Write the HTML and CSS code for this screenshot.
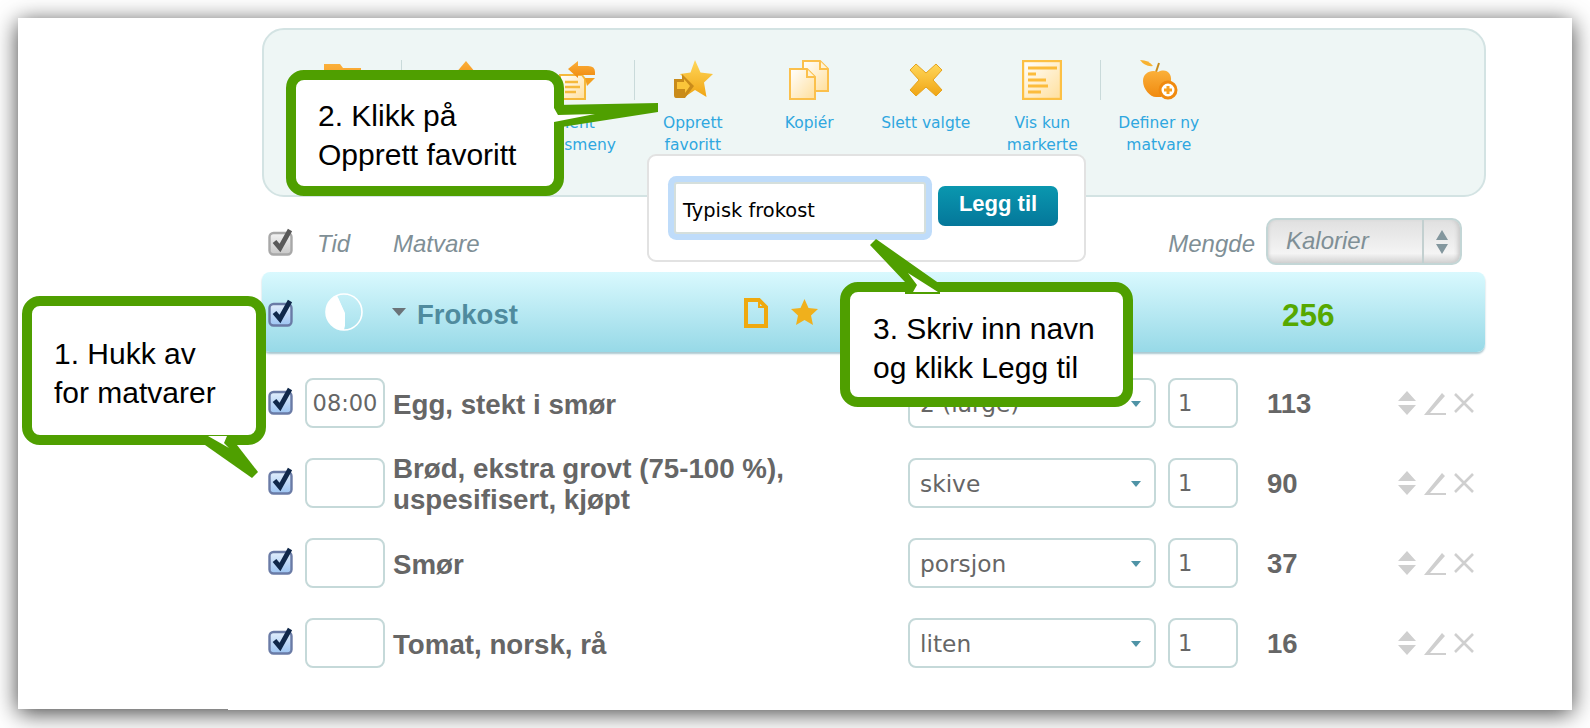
FILE: index.html
```html
<!DOCTYPE html>
<html lang="no">
<head>
<meta charset="utf-8">
<title>Kostholdsplan</title>
<link rel="stylesheet" href="styles.css">
</head>
<body>
<svg class="defs" width="0" height="0" aria-hidden="true">
  <defs>
    <linearGradient id="cbBlue" x1="0" y1="0" x2="0" y2="1"><stop offset="0" stop-color="#e2eefc"/><stop offset="1" stop-color="#9cc4f2"/></linearGradient>
    <linearGradient id="cbGrey" x1="0" y1="0" x2="0" y2="1"><stop offset="0" stop-color="#f4f4f4"/><stop offset="1" stop-color="#c8c8c8"/></linearGradient>
    <linearGradient id="gold" x1="0" y1="0" x2="0" y2="1"><stop offset="0" stop-color="#ffd75a"/><stop offset="1" stop-color="#f0a514"/></linearGradient>
    <linearGradient id="paper" x1="0" y1="0" x2="1" y2="1"><stop offset="0" stop-color="#ffffff"/><stop offset="1" stop-color="#ffdf9c"/></linearGradient>
    <linearGradient id="orange" x1="0" y1="0" x2="0" y2="1"><stop offset="0" stop-color="#fbb03a"/><stop offset="1" stop-color="#f08a10"/></linearGradient>
    <symbol id="cb" viewBox="0 0 26 29"><rect x="1.5" y="6" width="22" height="21.500" rx="4" fill="url(#cbBlue)" stroke="#6a7ba6" stroke-width="2.400"/><path d="M6.500 14.500l5.500 6.500L22 3" fill="none" stroke="#10284a" stroke-width="4.800"/></symbol>
    <symbol id="cbg" viewBox="0 0 26 29"><rect x="1.5" y="6" width="22" height="21.500" rx="4" fill="url(#cbGrey)" stroke="#a8a8a8" stroke-width="2.400"/><path d="M6.500 14.500l5.500 6.500L22 3" fill="none" stroke="#5a5a5a" stroke-width="4.800"/></symbol>
    <symbol id="acts" viewBox="0 0 76 26"><path d="M0 11L9 1l9 10zM0 15h18l-9 10z" fill="#cfcfcf"/><path d="M26 25L44 3l3 3-15 17h16v2z" fill="#cfcfcf"/><path d="M57 4l18 18M75 4L57 22" fill="none" stroke="#cfcfcf" stroke-width="2.600"/></symbol>
    <symbol id="arrow" viewBox="0 0 10 6"><path d="M0 0h10L5 6z" fill="#4f93a6"/></symbol>
  </defs>
</svg>

<main class="window">
  <section class="toolbar">
    <div class="tool sep">
      <svg class="ico" viewBox="0 0 40 40"><path d="M1 4h16l3 4h18v28H1z" fill="url(#orange)"/></svg>
    </div>
    <div class="tool">
      <svg class="ico" viewBox="0 0 40 40"><path d="M2 14h22v24H2z" fill="url(#paper)" stroke="#f5b93c" stroke-width="2"/><path d="M26 1l9 11-12 10-8-8z" fill="url(#orange)"/></svg>
    </div>
    <div class="tool sep">
      <svg class="ico" viewBox="0 0 40 40"><path d="M4 15h22l3 4v20H4z" fill="url(#paper)" stroke="#f5b93c" stroke-width="2"/><path d="M9 22h13M9 27h15M9 32h11" stroke="#f5b93c" stroke-width="2.500"/><path d="M12 9l10-8v5h10q7 0 7 6v3H22v3z" fill="url(#orange)"/><path d="M29 18h10l-8 8z" fill="#f3a020"/></svg>
      <span>Hent<br>ukesmeny</span>
    </div>
    <div class="tool">
      <svg class="ico" viewBox="0 0 40 40"><path d="M22 0l5.500 12.500L40 14l-9 8.500L33.500 37 22 30 13 36l2-14L7 14l10.500-1.500z" fill="url(#gold)"/><path d="M1 19h8v-5l12 12-9 12H3q-2 0-2-3z" fill="#c98b1a"/><path d="M4 22h7v-3l6 7-5 7v-4H4z" fill="#fbc53a"/></svg>
      <span>Opprett<br>favoritt</span>
    </div>
    <div class="tool">
      <svg class="ico" viewBox="0 0 40 40"><path d="M14 1h17l8 8v22H14z" fill="url(#paper)" stroke="#fbc04c" stroke-width="2"/><path d="M31 1v8h8" fill="#fff3d6" stroke="#fbc04c" stroke-width="2"/><path d="M1 9h17l8 8v22H1z" fill="url(#paper)" stroke="#fbc04c" stroke-width="2"/><path d="M18 9v8h8" fill="#fff3d6" stroke="#fbc04c" stroke-width="2"/></svg>
      <span>Kopiér</span>
    </div>
    <div class="tool">
      <svg class="ico" viewBox="0 0 40 40"><path d="M10 4l10 9 10-9 6 6-9 10 9 10-6 6-10-9-10 9-6-6 9-10-9-10z" fill="url(#gold)" stroke="#e6a41e"/></svg>
      <span>Slett valgte</span>
    </div>
    <div class="tool sep">
      <svg class="ico" viewBox="0 0 40 40"><rect x="1" y="1" width="38" height="38" fill="url(#paper)" stroke="#fcc044" stroke-width="2.400"/><path d="M6 8h29M6 14h8M6 20h18M6 26h20M6 32h13" stroke="#fcbc3c" stroke-width="3"/></svg>
      <span>Vis kun<br>markerte</span>
    </div>
    <div class="tool">
      <svg class="ico" viewBox="0 0 40 40"><path d="M1 0q9 0 13 6-8 1-13-6z" fill="#f8b230"/><path d="M20 3l-3 9" stroke="#c98b1a" stroke-width="2" fill="none"/><path d="M19 12c8-4 14 1 13 9-4 1-9 5-10 12v4h-1c-1 0-3 0-4 0-6 0-13-8-13-16 0-8 8-12 15-9z" fill="url(#orange)"/><circle cx="29" cy="30" r="8" fill="#fff" stroke="#f08a10" stroke-width="3"/><path d="M25 30h8M29 26v8" stroke="#f8a020" stroke-width="3"/></svg>
      <span>Definer ny<br>matvare</span>
    </div>
  </section>

  <section class="head">
    <svg class="cb"><use href="#cbg"/></svg>
    <span class="h-tid">Tid</span>
    <span class="h-mat">Matvare</span>
    <span class="h-men">Mengde</span>
    <div class="unit">
      <span class="unit-val">Kalorier</span>
      <span class="unit-btn"><svg width="16" height="28" viewBox="0 0 16 28"><path d="M2 12L8 2l6 10zM2 16h12L8 26z" fill="#83979e"/></svg></span>
    </div>
  </section>

  <section class="meal">
    <svg class="cb"><use href="#cb"/></svg>
    <svg class="clock" viewBox="0 0 38 38"><circle cx="19" cy="19" r="18" fill="none" stroke="#fff" stroke-width="1.600"/><path d="M19 19L19 37A18 18 0 0 1 12 2.500z" fill="#fff"/><path d="M12 2.500L20 20V37" fill="#fff"/></svg>
    <svg class="tri" viewBox="0 0 14 8"><path d="M0 0h14L7 8z" fill="#6b7378"/></svg>
    <strong class="meal-name">Frokost</strong>
    <svg class="doc" viewBox="0 0 24 30"><path d="M2 2h13l7 7v19H2z" fill="none" stroke="#efa90f" stroke-width="4"/><path d="M15 2v7h7" fill="none" stroke="#efa90f" stroke-width="2"/></svg>
    <svg class="mstar" viewBox="0 0 27 26"><path d="M13.500 0l4 9 9.500 1-7 6.500 2 9.500-8.500-5-8.500 5 2-9.500L0 10l9.500-1z" fill="#f0b01c"/></svg>
    <strong class="meal-sum">256</strong>
  </section>

  <section class="rows">
    <div class="row">
      <svg class="cb"><use href="#cb"/></svg>
      <div class="field time">08:00</div>
      <div class="name">Egg, stekt i smør</div>
      <div class="field sel">2 (large)<svg class="sel-arrow"><use href="#arrow"/></svg></div>
      <div class="field qty">1</div>
      <div class="num">113</div>
      <svg class="acts"><use href="#acts"/></svg>
    </div>
    <div class="row">
      <svg class="cb"><use href="#cb"/></svg>
      <div class="field time"></div>
      <div class="name">Brød, ekstra grovt (75-100 %),<br>uspesifisert, kjøpt</div>
      <div class="field sel">skive<svg class="sel-arrow"><use href="#arrow"/></svg></div>
      <div class="field qty">1</div>
      <div class="num">90</div>
      <svg class="acts"><use href="#acts"/></svg>
    </div>
    <div class="row">
      <svg class="cb"><use href="#cb"/></svg>
      <div class="field time"></div>
      <div class="name">Smør</div>
      <div class="field sel">porsjon<svg class="sel-arrow"><use href="#arrow"/></svg></div>
      <div class="field qty">1</div>
      <div class="num">37</div>
      <svg class="acts"><use href="#acts"/></svg>
    </div>
    <div class="row">
      <svg class="cb"><use href="#cb"/></svg>
      <div class="field time"></div>
      <div class="name">Tomat, norsk, rå</div>
      <div class="field sel">liten<svg class="sel-arrow"><use href="#arrow"/></svg></div>
      <div class="field qty">1</div>
      <div class="num">16</div>
      <svg class="acts"><use href="#acts"/></svg>
    </div>
  </section>

  <div class="popup">
    <div class="pop-input">Typisk frokost</div>
    <div class="pop-btn">Legg til</div>
  </div>

  <div class="callout c1">
    <svg class="tail" width="244" height="149"><path d="M183 149L230 182 236 176 215 149z" fill="#4f9f00"/><path d="M186 140H205L202 147 207 152z" fill="#fff"/></svg>
    1. Hukk av<br>for matvarer
  </div>
  <div class="callout c2">
    <svg class="tail" width="278" height="126"><path d="M269 35L372 33V42L269 58z" fill="#4f9f00"/><path d="M268 38L272 45 309 44 268 52z" fill="#fff"/></svg>
    2. Klikk på<br>Opprett favoritt
  </div>
  <div class="callout c3">
    <svg class="tail" width="293" height="125"><path d="M30-37L36-43 100 2V12H65V0z" fill="#4f9f00"/><path d="M68-9L98 10H73L77 3z" fill="#fff"/></svg>
    3. Skriv inn navn<br>og klikk Legg til
  </div>
</main>
</body>
</html>
```

FILE: styles.css
```css
* { box-sizing: border-box; }
html, body { margin: 0; height: 100%; background: #fff; overflow: hidden; }
.defs { position: absolute; }

.window {
  position: relative;
  width: 1554px;
  height: 691px;
  margin: 18px;
  padding: 10px 0 0 244px;
  background: #fff;
  box-shadow: 0 4px 22px rgba(0, 0, 0, .75);
  font-family: "Liberation Sans", Arial, sans-serif;
}
.window::after {
  content: "";
  position: absolute;
  left: 210px;
  right: 0;
  bottom: -1px;
  height: 1px;
  background: #fff;
}

/* toolbar */
.toolbar {
  display: flex;
  width: 1224px;
  height: 169px;
  padding: 30px 0 0 21px;
  background: #eef6f5;
  border: 2px solid #d3e3e3;
  border-radius: 22px;
}
.tool {
  position: relative;
  width: 116.500px;
  text-align: center;
  font: 15.500px/22px "DejaVu Sans", Verdana, sans-serif;
  color: #2fa7e0;
}
.tool span { display: block; margin-top: 12px; }
.ico { display: block; width: 40px; height: 40px; margin: 0 auto; }
.sep::after {
  content: "";
  position: absolute;
  right: 0;
  top: 0;
  width: 1px;
  height: 40px;
  background: #c9dada;
}

/* column headers */
.head {
  display: flex;
  align-items: center;
  height: 47px;
  margin: 21px 0 7px;
  padding-left: 6px;
  width: 1200px;
  font-style: italic;
  font-size: 24px;
  color: #7f8f96;
}
.cb { display: block; width: 26px; height: 29px; flex: none; }
.h-tid { width: 76px; margin: 5px 0 0 23px; }
.h-mat { margin-top: 5px; }
.h-men { margin: 5px 0 0 auto; }
.unit {
  display: flex;
  width: 196px;
  height: 47px;
  margin-left: 11px;
  border: 2px solid #c3d6d6;
  border-radius: 10px;
  background: linear-gradient(#e0e0e0, #f4f4f4 78%, #d2d2d2);
  box-shadow: inset 3px 0 3px -2px #cfcfcf, inset -4px 0 4px -2px #c8c8c8;
}
.unit-val { flex: 1; padding: 7px 0 0 18px; border-right: 2px solid #c3d0d0; }
.unit-btn { display: flex; width: 36px; align-items: center; justify-content: center; }

/* meal bar */
.meal {
  display: flex;
  align-items: center;
  width: 1223px;
  height: 80px;
  padding-left: 6px;
  border-radius: 8px;
  background: linear-gradient(#d9f9fe, #97d9e7);
  box-shadow: 0 2px 2px #aac8d0;
}
.clock { width: 38px; height: 38px; margin-left: 31px; flex: none; }
.tri { width: 14px; height: 8px; margin-left: 29px; flex: none; }
.meal-name { margin: 6px 0 0 11px; width: 327px; font-size: 27.500px; color: #4f8b9e; }
.doc { width: 24px; height: 30px; margin-top: 2px; flex: none; }
.mstar { width: 27px; height: 26px; margin-left: 23px; flex: none; }
.meal-sum { margin: 7px 0 0 464px; font-size: 31.500px; color: #56a800; }

/* rows */
.rows { margin-top: 11px; width: 1218px; }
.row {
  display: grid;
  grid-template-columns: 37px 88px 515px 260px 99px 131px 76px;
  align-items: center;
  height: 80px;
  padding-left: 6px;
}
.row .cb { margin-top: -5px; }
.field {
  position: relative;
  height: 50px;
  border: 2px solid #c5d9d9;
  border-radius: 8px;
  background: #fff;
  font: 22.500px/47px "DejaVu Sans", Verdana, sans-serif;
  color: #666;
}
.time { width: 80px; text-align: center; white-space: nowrap; }
.sel { width: 248px; padding-left: 10px; font-size: 23.300px; }
.qty { width: 70px; padding-left: 8px; }
.sel-arrow { position: absolute; right: 13px; top: 21px; width: 10px; height: 6px; }
.name { padding-top: 2px; font-weight: 700; font-size: 27.700px; line-height: 31px; color: #666; }
.num { padding-top: 2px; font-weight: 700; font-size: 27.500px; color: #666; }
.acts { display: block; width: 76px; height: 26px; }

/* popup */
.popup {
  position: absolute;
  left: 629px;
  top: 136px;
  display: flex;
  width: 439px;
  height: 108px;
  padding: 20px 0 0 19px;
  background: #fff;
  border: 2px solid #e2e2e2;
  border-radius: 9px;
}
.pop-input {
  width: 252px;
  height: 52px;
  margin: 6px 12px 6px 6px;
  padding-left: 7px;
  border: 2px solid #d5dfdc;
  border-radius: 3px;
  box-shadow: 0 0 0 6px #bfdcfa;
  background: #fff;
  font: 19.400px/54px "DejaVu Sans", Verdana, sans-serif;
  color: #000;
}
.pop-btn {
  width: 120px;
  height: 40px;
  margin-top: 10px;
  border-radius: 7px;
  background: linear-gradient(#0a97af, #04779a);
  font-weight: 700;
  font-size: 22px;
  line-height: 36px;
  text-align: center;
  color: #fff;
}

/* callouts */
.callout {
  position: absolute;
  background: #fff;
  border: 10px solid #4f9f00;
  border-radius: 18px;
  font-size: 30px;
  line-height: 38.500px;
  color: #000;
  white-space: nowrap;
}
.tail { position: absolute; left: -10px; top: -10px; overflow: visible; }
.c1 { left: 4px; top: 278px; width: 244px; height: 149px; padding: 29px 0 0 22px; }
.c2 { left: 268px; top: 52px; width: 278px; height: 126px; padding: 17px 0 0 22px; }
.c3 { left: 822px; top: 264px; width: 293px; height: 125px; padding: 18px 0 0 23px; }
```
